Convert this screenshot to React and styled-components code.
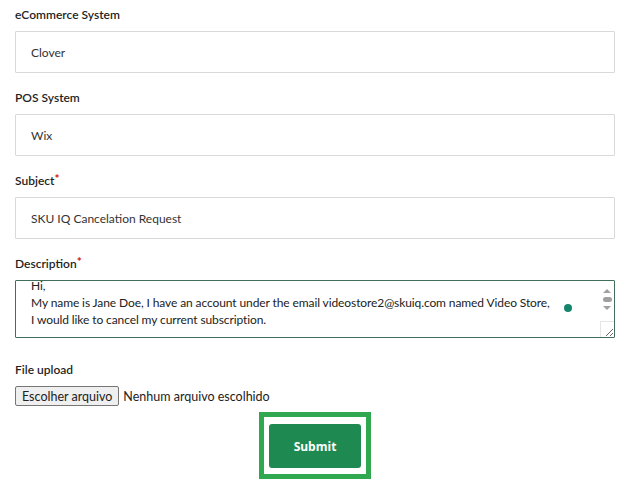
import React, { useEffect, useRef } from 'react';
import styled, { createGlobalStyle } from 'styled-components';

const GlobalStyle = createGlobalStyle`
  body {
    margin: 0;
    background: #fff;
    font-family: Lato, "Liberation Sans", sans-serif;
  }
`;

const Form = styled.form`
  padding: 6px 14px 10px 15px;
  display: flex;
  flex-direction: column;
`;

const Field = styled.div`
  display: flex;
  flex-direction: column;
  margin-bottom: ${({ $gap }) => ($gap == null ? 16 : $gap)}px;
`;

const Label = styled.label`
  font-size: 12px;
  font-weight: 600;
  color: #1f1f1f;
  line-height: 17px;
  margin-bottom: 8px;
`;

const Required = styled.span`
  color: #d0101c;
  font-size: 12px;
  font-weight: 700;
  vertical-align: top;
  position: relative;
  top: -2px;
`;

const Input = styled.input`
  box-sizing: border-box;
  height: 42px;
  width: 100%;
  border: 1px solid #d9d9d9;
  border-radius: 1px;
  padding: 0 15px;
  font-family: inherit;
  font-size: 12px;
  color: #333;
  background: #fff;
  outline: none;
`;

const AreaWrap = styled.div`
  position: relative;
`;

const TextArea = styled.textarea`
  box-sizing: border-box;
  display: block;
  width: 100%;
  height: 58px;
  border: 1px solid #3f6f5b;
  border-radius: 1px;
  padding: 10px 24px 10px 15px;
  font-family: inherit;
  font-size: 12px;
  letter-spacing: -0.1px;
  line-height: 17px;
  color: #222;
  resize: vertical;
  outline: none;
`;

/* fake classic scrollbar drawn over the textarea */
const ScrollTrack = styled.div`
  position: absolute;
  top: 1px;
  right: 1px;
  width: 14px;
  height: 40px;
  display: flex;
  flex-direction: column;
  align-items: center;
  padding-top: 8px;
  gap: 4px;
  pointer-events: none;
`;

const Arrow = styled.span`
  width: 0;
  height: 0;
  border-left: 4px solid transparent;
  border-right: 4px solid transparent;
  ${({ $down }) =>
    $down ? 'border-top: 4px solid #a0a0a0;' : 'border-bottom: 4px solid #a0a0a0;'}
`;

const Thumb = styled.span`
  width: 9px;
  height: 5px;
  border-radius: 3px;
  background: #a0a0a0;
`;

const ResizeBox = styled.span`
  position: absolute;
  right: 1px;
  bottom: 1px;
  width: 13px;
  height: 15px;
  border-left: 1px solid #e6e6e6;
  border-top: 1px solid #e6e6e6;
  pointer-events: none;
`;

const Dot = styled.span`
  position: absolute;
  right: 43px;
  top: 24px;
  width: 8px;
  height: 8px;
  border-radius: 50%;
  background: #15866b;
`;

const FileRow = styled.div`
  display: flex;
  align-items: center;
  gap: 4px;
  font-size: 12.5px;
  color: #222;
`;

const FileButton = styled.button`
  font-family: inherit;
  font-size: 12.5px;
  color: #222;
  background: #efefef;
  border: 1px solid #767676;
  border-radius: 2px;
  height: 20px;
  padding: 0 6px;
`;

const SubmitFrame = styled.div`
  align-self: center;
  margin-top: 6px;
  border: 5px solid #2fa84f;
  padding: 7px 5px 6px 5px;
  display: flex;
`;

const SubmitButton = styled.button`
  width: 92px;
  height: 44px;
  border: none;
  border-radius: 3px;
  background: #1e8a52;
  color: #fff;
  font-family: "Open Sans", sans-serif;
  font-weight: 700;
  font-size: 12px;
`;

const description =
  'Hi,\nMy name is Jane Doe, I have an account under the email videostore2@skuiq.com named Video Store,\nI would like to cancel my current subscription.';

export default function App() {
  const areaRef = useRef(null);
  useEffect(() => {
    if (areaRef.current) areaRef.current.scrollTop = 14;
  }, []);

  return (
    <>
      <GlobalStyle />
      <Form onSubmit={(e) => e.preventDefault()}>
        <Field>
          <Label>eCommerce System</Label>
          <Input defaultValue="Clover" />
        </Field>
        <Field>
          <Label>POS System</Label>
          <Input defaultValue="Wix" />
        </Field>
        <Field>
          <Label>
            Subject<Required>*</Required>
          </Label>
          <Input defaultValue="SKU IQ Cancelation Request" />
        </Field>
        <Field $gap={23}>
          <Label>
            Description<Required>*</Required>
          </Label>
          <AreaWrap>
            <TextArea ref={areaRef} defaultValue={description} />
            <Dot />
            <ScrollTrack>
              <Arrow />
              <Thumb />
              <Arrow $down />
            </ScrollTrack>
            <ResizeBox />
          </AreaWrap>
        </Field>
        <Field $gap={0}>
          <Label>File upload</Label>
          <FileRow>
            <FileButton type="button">Escolher arquivo</FileButton>
            <span>Nenhum arquivo escolhido</span>
          </FileRow>
        </Field>
        <SubmitFrame>
          <SubmitButton type="submit">Submit</SubmitButton>
        </SubmitFrame>
      </Form>
    </>
  );
}
